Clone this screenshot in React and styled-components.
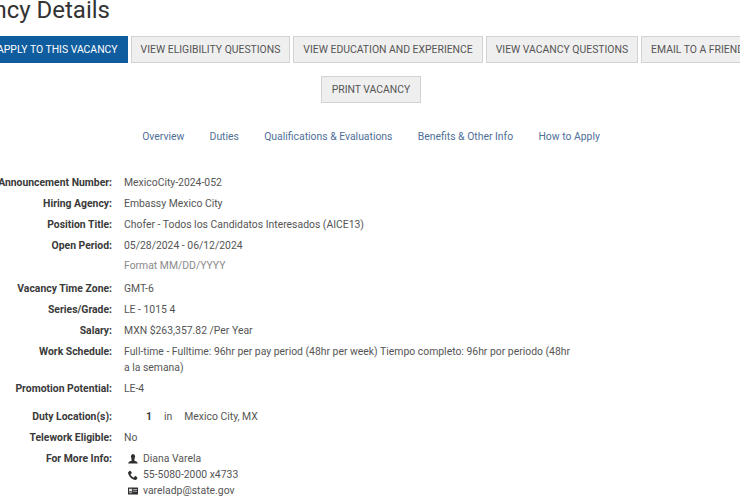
import React from "react";
import styled, { createGlobalStyle } from "styled-components";
import { ImPhone } from "react-icons/im";

const Global = createGlobalStyle`
  html, body { margin: 0; padding: 0; background: #fff; overflow: hidden; }
  body { font-family: Roboto, "Liberation Sans", sans-serif; color: #444; }
`;
const Page = styled.div`
  width: 742px;
  height: 499px;
  overflow: hidden;
`;
const Title = styled.h1`
  margin: -7px 0 0 -60px;
  font-size: 24px;
  line-height: 34px;
  font-weight: 400;
  color: #333;
  white-space: nowrap;
`;
const ButtonRow = styled.div`
  display: flex;
  gap: 3px;
  margin: 9px 0 0 -13px;
`;
const Button = styled.a`
  flex: none;
  box-sizing: border-box;
  height: 27px;
  padding: 0 ${p => p.$pad ?? 9}px;
  display: flex;
  align-items: center;
  font-size: 10.4px;
  white-space: nowrap;
  color: ${p => (p.$primary ? "#fff" : "#555")};
  background: ${p => (p.$primary ? "#0f5c9e" : "#f0efef")};
  border: 1px solid ${p => (p.$primary ? "#0f5c9e" : "#d2d2d2")};
`;
const PrintRow = styled.div`
  display: flex;
  justify-content: center;
  margin-top: 13px;
`;
const Tabs = styled.nav`
  display: flex;
  justify-content: center;
  gap: 25.3px;
  margin-top: 26px;
`;
const Tab = styled.a`
  font-size: 10.4px;
  line-height: 16px;
  color: #4f6f98;
`;
const Details = styled.div`
  display: flex;
  flex-direction: column;
  margin-top: 30px;
`;
const Row = styled.div`
  display: grid;
  grid-template-columns: 112px 448px;
  column-gap: 12px;
  font-size: 10.4px;
  line-height: 16px;
  margin-bottom: ${p => p.$gap ?? 5}px;
`;
const Label = styled.div`
  display: flex;
  justify-content: flex-end;
  font-weight: 700;
  white-space: nowrap;
  color: #3a3a3a;
`;
const Value = styled.div`
  color: #555;
`;
const Hint = styled.div`
  color: #8a8a8a;
  margin-top: 4px;
`;
const Location = styled.div`
  display: flex;
  color: #555;
  padding-left: 22px;
  gap: 12px;
`;
const Count = styled.b`
  color: #3a3a3a;
`;
const Contact = styled.div`
  display: flex;
  align-items: center;
  gap: 5px;
  height: 16px;
  padding-left: 4px;
  svg { width: 10px; height: 10px; color: #2e2e2e; flex: none; }
`;
const ContactList = styled.div`
  display: flex;
  flex-direction: column;
  color: #555;
`;

const UserIcon = () => (
  <svg viewBox="0 0 10 10" fill="currentColor">
    <ellipse cx="5" cy="2.6" rx="2.1" ry="2.6" />
    <path d="M3.3 4.6 L3.8 6.4 C2.6 7.1 .4 7.3 .2 9.6 L9.8 9.6 C9.6 7.3 7.4 7.1 6.2 6.4 L6.7 4.6Z" />
  </svg>
);
const CardIcon = () => (
  <svg viewBox="0 0 10 10">
    <rect x="0" y="1.6" width="10" height="6.8" rx=".5" fill="currentColor" />
    <rect x="1" y="2.8" width="3.2" height="2.6" fill="#fff" opacity=".85" />
    <rect x="1" y="6.2" width="3.2" height="1" fill="#fff" opacity=".6" />
    <rect x="5.2" y="3" width="3.8" height=".9" fill="#fff" opacity=".7" />
    <rect x="5.2" y="4.8" width="3.8" height=".9" fill="#fff" opacity=".7" />
  </svg>
);

const rows = [
  ["Announcement Number:", "MexicoCity-2024-052"],
  ["Hiring Agency:", "Embassy Mexico City"],
  ["Position Title:", "Chofer - Todos los Candidatos Interesados (AICE13)"],
];
const rows2 = [
  ["Vacancy Time Zone:", "GMT-6"],
  ["Series/Grade:", "LE - 1015 4"],
  ["Salary:", "MXN $263,357.82 /Per Year"],
  ["Work Schedule:", "Full-time - Fulltime: 96hr per pay period (48hr per week) Tiempo completo: 96hr por periodo (48hr a la semana)"],
];

export default function App() {
  return (
    <Page>
      <Global />
      <Title>Vacancy Details</Title>
      <ButtonRow>
        <Button $primary>APPLY TO THIS VACANCY</Button>
        <Button>VIEW ELIGIBILITY QUESTIONS</Button>
        <Button>VIEW EDUCATION AND EXPERIENCE</Button>
        <Button>VIEW VACANCY QUESTIONS</Button>
        <Button>EMAIL TO A FRIEND</Button>
      </ButtonRow>
      <PrintRow>
        <Button $pad={10}>PRINT VACANCY</Button>
      </PrintRow>
      <Tabs>
        <Tab>Overview</Tab>
        <Tab>Duties</Tab>
        <Tab>Qualifications &amp; Evaluations</Tab>
        <Tab>Benefits &amp; Other Info</Tab>
        <Tab>How to Apply</Tab>
      </Tabs>
      <Details>
        {rows.map(([l, v]) => (
          <Row key={l}><Label>{l}</Label><Value>{v}</Value></Row>
        ))}
        <Row $gap={7}>
          <Label>Open Period:</Label>
          <Value>05/28/2024 - 06/12/2024<Hint>Format MM/DD/YYYY</Hint></Value>
        </Row>
        {rows2.map(([l, v]) => (
          <Row key={l}><Label>{l}</Label><Value>{v}</Value></Row>
        ))}
        <Row $gap={12}><Label>Promotion Potential:</Label><Value>LE-4</Value></Row>
        <Row>
          <Label>Duty Location(s):</Label>
          <Location><Count>1</Count><span>in</span><span>Mexico City, MX</span></Location>
        </Row>
        <Row><Label>Telework Eligible:</Label><Value>No</Value></Row>
        <Row>
          <Label>For More Info:</Label>
          <ContactList>
            <Contact><UserIcon />Diana Varela</Contact>
            <Contact><ImPhone />55-5080-2000 x4733</Contact>
            <Contact><CardIcon />vareladp@state.gov</Contact>
          </ContactList>
        </Row>
      </Details>
    </Page>
  );
}
